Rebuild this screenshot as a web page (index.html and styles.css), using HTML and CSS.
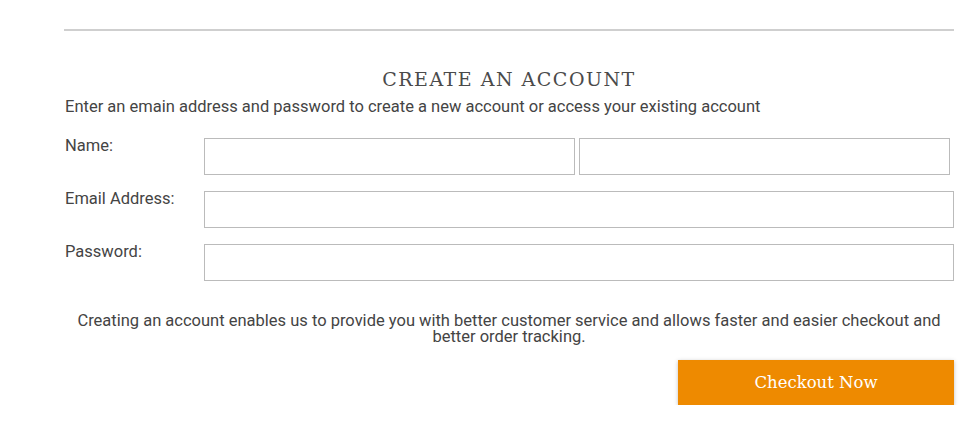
FILE: index.html
```html
<!DOCTYPE html>
<html>

<head>
    <link rel="stylesheet" href="styles.css">
</head>

<body>
    <section class="account">
        <hr class="divider">
        <h2 class="account-title">CREATE AN ACCOUNT</h2>
        <p class="account-intro">Enter an emain address and password to create a new account or access your existing account</p>
        <form class="account-form">
            <div class="form-row">
                <label class="form-label">Name:</label>
                <div class="name-fields">
                    <input type="text" class="form-input">
                    <input type="text" class="form-input">
                </div>
            </div>
            <div class="form-row">
                <label class="form-label">Email Address:</label>
                <input type="email" class="form-input">
            </div>
            <div class="form-row">
                <label class="form-label">Password:</label>
                <input type="password" class="form-input">
            </div>
        </form>
        <p class="account-note">Creating an account enables us to provide you with better customer service and allows faster and easier checkout and better order tracking.</p>
        <div class="actions">
            <button class="checkout-btn">Checkout Now</button>
        </div>
    </section>
</body>
</html>
```

FILE: styles.css
```css
body {
    margin: 0;
    font-family: Roboto, "Liberation Sans", sans-serif;
    color: #444;
    background: #fff;
}

.account {
    width: 890px;
    margin: 0 0 0 64px;
    padding-top: 29px;
}

.divider {
    margin: 0;
    border: 0;
    height: 2px;
    background: #cfcfcf;
}

.account-title {
    margin: 36px 0 0 0;
    text-align: center;
    font-family: "DejaVu Serif", "Liberation Serif", serif;
    font-weight: normal;
    font-size: 19px;
    letter-spacing: 1.5px;
    line-height: 24px;
    color: #4a4a4a;
}

.account-intro {
    margin: 6px 0 0 1px;
    font-size: 16.5px;
    line-height: 20px;
}

.account-form {
    margin-top: 21px;
}

.form-row {
    display: flex;
    margin-bottom: 16px;
}

.form-label {
    width: 139px;
    flex: none;
    padding-left: 1px;
    font-size: 16.5px;
    line-height: 16px;
}

.name-fields {
    display: flex;
    gap: 4px;
    width: 746px;
}

.form-input {
    flex: 1;
    min-width: 0;
    height: 37px;
    box-sizing: border-box;
    border: 1px solid #bbb;
    margin: 0;
    padding: 0 8px;
    font: inherit;
}

.account-note {
    margin: 32px 0 0 0;
    text-align: center;
    font-size: 16.5px;
    line-height: 16px;
}

.actions {
    display: flex;
    justify-content: flex-end;
    margin-top: 15px;
}

.checkout-btn {
    width: 276px;
    height: 45px;
    border: 0;
    background: #ee8a00;
    color: #fff;
    font-family: "DejaVu Serif", "Liberation Serif", serif;
    font-size: 16.5px;
    box-shadow: 0 1px 4px rgba(0, 0, 0, 0.25);
    cursor: pointer;
}
```
